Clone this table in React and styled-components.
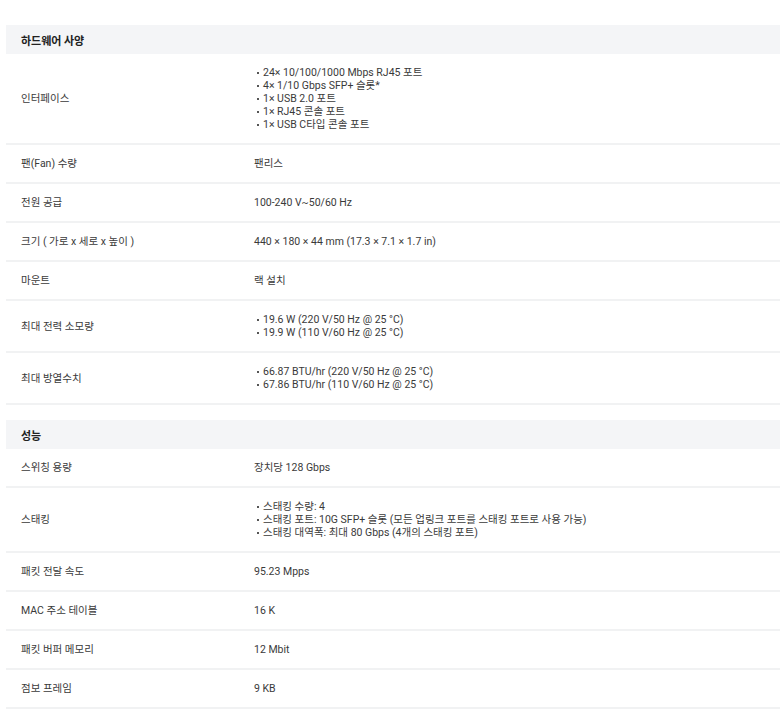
import React from 'react';
import styled, { createGlobalStyle } from 'styled-components';

const sections = [
  {
    title: '하드웨어 사양',
    rows: [
      {
        label: '인터페이스',
        value: [
          '24× 10/100/1000 Mbps RJ45 포트',
          '4× 1/10 Gbps SFP+ 슬롯*',
          '1× USB 2.0 포트',
          '1× RJ45 콘솔 포트',
          '1× USB C타입 콘솔 포트',
        ],
      },
      { label: '팬(Fan) 수량', value: '팬리스' },
      { label: '전원 공급', value: '100-240 V~50/60 Hz' },
      { label: '크기 ( 가로 x 세로 x 높이 )', value: '440 × 180 × 44 mm (17.3 × 7.1 × 1.7 in)' },
      { label: '마운트', value: '랙 설치' },
      {
        label: '최대 전력 소모량',
        value: ['19.6 W (220 V/50 Hz @ 25 °C)', '19.9 W (110 V/60 Hz @ 25 °C)'],
      },
      {
        label: '최대 방열수치',
        value: ['66.87 BTU/hr (220 V/50 Hz @ 25 °C)', '67.86 BTU/hr (110 V/60 Hz @ 25 °C)'],
      },
    ],
  },
  {
    title: '성능',
    rows: [
      { label: '스위칭 용량', value: '장치당 128 Gbps' },
      {
        label: '스태킹',
        value: [
          '스태킹 수량: 4',
          '스태킹 포트: 10G SFP+ 슬롯 (모든 업링크 포트를 스태킹 포트로 사용 가능)',
          '스태킹 대역폭: 최대 80 Gbps (4개의 스태킹 포트)',
        ],
      },
      { label: '패킷 전달 속도', value: '95.23 Mpps' },
      { label: 'MAC 주소 테이블', value: '16 K' },
      { label: '패킷 버퍼 메모리', value: '12 Mbit' },
      { label: '점보 프레임', value: '9 KB' },
    ],
  },
];

const SpecTable = () => {
  return (
    <Page>
      <GlobalStyle />
      {sections.map((section) => (
        <Section key={section.title}>
          <SectionHeader>{section.title}</SectionHeader>
          {section.rows.map((row) => (
            <Row key={row.label}>
              <Line>{row.label}</Line>
              {Array.isArray(row.value) ? (
                <BulletList>
                  {row.value.map((item) => (
                    <Bullet key={item}>{item}</Bullet>
                  ))}
                </BulletList>
              ) : (
                <Line>{row.value}</Line>
              )}
            </Row>
          ))}
        </Section>
      ))}
    </Page>
  );
};

const GlobalStyle = createGlobalStyle`
  body {
    margin: 0;
    background: #ffffff;
    font-family: 'Roboto', 'Noto Sans CJK KR', sans-serif;
    color: #333333;
  }
`;

const Page = styled.div`
  padding: 25px 0 0 6px;
  display: flex;
  flex-direction: column;
  gap: 15px;
`;

const Section = styled.section`
  display: flex;
  flex-direction: column;
`;

const SectionHeader = styled.h3`
  margin: 0;
  height: 29px;
  display: flex;
  align-items: center;
  padding: 0 15px;
  background: #f4f5f7;
  font-family: 'Noto Sans CJK KR', sans-serif;
  font-size: 11px;
  font-weight: 700;
  color: #222222;
`;

const Row = styled.div`
  display: grid;
  grid-template-columns: 233px 1fr;
  align-items: center;
  padding: 12px 0 12px 15px;
  border-bottom: 2px solid #f1f2f3;
  font-size: 10.5px;
  color: #3a3a3a;
`;

const Line = styled.div`
  height: 13px;
  line-height: 13px;
  white-space: nowrap;
`;

const BulletList = styled.ul`
  margin: 0;
  padding: 0;
  list-style: none;
`;

const Bullet = styled.li`
  display: flex;
  align-items: center;
  height: 13px;
  line-height: 13px;
  white-space: nowrap;

  &::before {
    content: '';
    flex: none;
    width: 2px;
    height: 2px;
    margin: 1px 4px 0 3px;
    background: #555555;
  }
`;

export default SpecTable;
